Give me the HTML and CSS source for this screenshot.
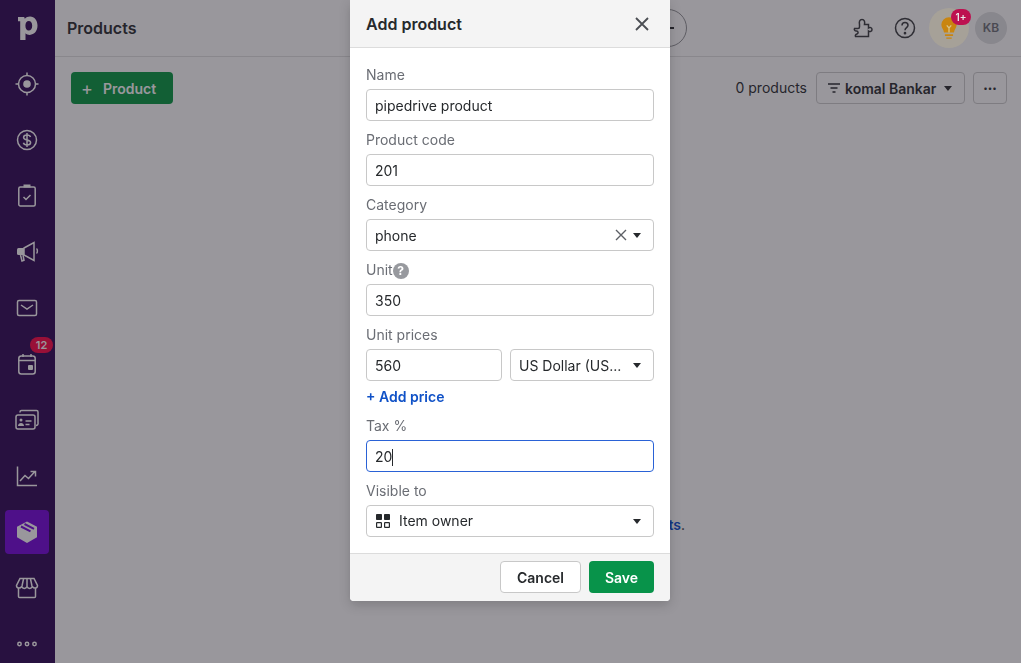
FILE: index.html

```html
<!DOCTYPE html>
<html lang="en">
<head>
  <meta charset="UTF-8" />
  <title>Products</title>
  <link rel="stylesheet" href="styles.css">
</head>
<body>

  <nav class="sidebar">
    <div class="nav-item logo">
      <svg width="24" height="28" viewBox="0 0 24 28"><path fill-rule="evenodd" d="M3 3h6.2l.6 1.8C11 3.500 13 2.600 15 2.600c4.700 0 7.500 4 7.500 9 0 5.300-3.200 9.300-7.700 9.300-1.900 0-3.300-.7-4.300-1.700V26H5.200V7.300H3zM10.400 11.700c0 3.100 1.300 4.700 3.300 4.700s3.500-1.700 3.500-4.700c0-3.100-1.400-4.800-3.400-4.800-2.100 0-3.400 1.700-3.400 4.800z"/></svg>
    </div>
    <div class="nav-item">
      <svg class="ico" viewBox="0 0 24 24"><circle cx="12" cy="12" r="8.500"/><circle class="solid" cx="12" cy="12" r="3.800"/><path d="M12 .5v3M12 20.500v3M.5 12h3M20.500 12h3"/></svg>
    </div>
    <div class="nav-item">
      <svg class="ico" viewBox="0 0 24 24"><circle cx="12" cy="12" r="9.500"/><path d="M15.500 9c-.4-1.400-1.800-2-3.500-2-1.900 0-3.400.9-3.400 2.500 0 3.500 7 1.600 7 5 0 1.600-1.600 2.500-3.600 2.500-1.800 0-3.200-.8-3.600-2.200M12 5v14"/></svg>
    </div>
    <div class="nav-item">
      <svg class="ico" viewBox="0 0 24 24"><rect x="3.800" y="3" width="16.400" height="19" rx="1.500"/><path class="thick" d="M8.500 2h7"/><path d="M8.500 13l2.500 2.500 4.500-4.500"/></svg>
    </div>
    <div class="nav-item">
      <svg class="ico" viewBox="0 0 24 24"><path class="solid" d="M2 9.500a1.500 1.500 0 0 1 1.500-1.500H9v7H3.500A1.500 1.500 0 0 1 2 13.500z"/><path d="M9 8l10-5.500v18L9 15z"/><path d="M21.500 8.500c1.200 1 1.200 4 0 5M5.500 15l1.500 6 2-.7L8 15"/></svg>
    </div>
    <div class="nav-item">
      <svg class="ico" viewBox="0 0 24 24"><rect x="2.500" y="4.500" width="19" height="15" rx="1.500"/><path d="M6 9l6 4 6-4"/></svg>
    </div>
    <div class="nav-item">
      <svg class="ico" viewBox="0 0 24 24"><rect x="3.800" y="4" width="16.400" height="18" rx="2.500"/><path d="M3.800 8.500h16.400M8 2v3M16 2v3"/><rect class="solid" x="13" y="13" width="5" height="5" rx="1"/></svg>
      <span class="count">12</span>
    </div>
    <div class="nav-item">
      <svg class="ico" viewBox="0 0 24 24"><rect x="1" y="7" width="19" height="14" rx="2"/><path d="M5 4.500V4a1.500 1.500 0 0 1 1.500-1.500H21.500A1.500 1.500 0 0 1 23 4v11a2 2 0 0 1-2 2.500M10.500 13h6M10.500 16.500h4"/><circle class="solid" cx="6" cy="12" r="1.500"/><path class="solid" d="M3 18c0-2 1.500-3 3-3s3 1 3 3z"/></svg>
    </div>
    <div class="nav-item">
      <svg class="ico" viewBox="0 0 24 24"><path d="M2.500 2.500v19h19.500M5 17l5-5.500 3.500 3 6-6.500M15.500 7.500h5v5"/></svg>
    </div>
    <div class="nav-item">
      <div class="nav-active">
        <svg width="24" height="24" viewBox="0 0 24 24"><path fill="#fff" d="M12 1.500l10 5.200v10.600L12 23 2 17.300V6.700z"/><path fill="none" stroke="#7100dc" stroke-width="2" d="M6 6.500l9.500 4.800M9.500 4l9.500 4.800"/></svg>
      </div>
    </div>
    <div class="nav-item">
      <svg class="ico" viewBox="0 0 24 24"><path d="M5 2.500h14l3.500 7c0 3-3.500 3.500-5.200 1-1 2.500-4.300 2.500-5.300 0-1 2.500-4.300 2.500-5.300 0-1.700 2.500-5.200 2-5.200-1zM3.500 11.500v9a1 1 0 0 0 1 1h15a1 1 0 0 0 1-1v-9M8.500 3L7 10M15.500 3l1.500 7M12 3v7"/></svg>
    </div>
    <div class="nav-item">
      <svg class="ico" viewBox="0 0 24 24"><circle cx="4.500" cy="12" r="1.700"/><circle cx="12" cy="12" r="1.700"/><circle cx="19.500" cy="12" r="1.700"/></svg>
    </div>
  </nav>

  <div class="main">
    <header class="topbar">
      <h1>Products</h1>
      <div class="quick-add"><span class="quick-plus"></span></div>
      <div class="top-icons">
        <svg class="top-ico" viewBox="0 0 24 24"><path d="M9.500 8.500C9 6 9.500 3.500 12 3.500S15 6 14.500 8.500H18.500V12C20 11 22 11.500 22 13.500S20 16 18.500 15V20.500H5.500C5 19.500 5.500 18.500 7 18C8.500 17.500 8.500 15 6.500 15C4.500 15 4 13.500 4.500 12.500H8C9 12.500 9.500 12 9.500 11Z"/></svg>
        <svg class="top-ico help-ico" viewBox="0 0 24 24"><circle cx="12" cy="12" r="9.500"/><path d="M9 9.500c0-1.800 1.300-3 3-3s3 1.200 3 2.800c0 2.400-3 2.400-3 5"/><circle class="dot" cx="12" cy="17.200" r=".6"/></svg>
        <div class="tips">
          <svg width="18" height="24" viewBox="0 0 20 26"><path fill="#c98510" d="M10 1a8.500 8.500 0 0 1 8.500 8.500c0 3.500-2.500 5-3 8.500h-11c-.5-3.500-3-5-3-8.500A8.500 8.500 0 0 1 10 1zM5.500 20h9v2h-9zM7 23.500h6V25H7z"/><path fill="none" stroke="#d8c48a" stroke-width="1.400" d="M7.500 10l2.500 3 2.500-3M10 13v5"/></svg>
          <span class="tips-count">1+</span>
        </div>
        <div class="avatar">KB</div>
      </div>
    </header>

    <div class="toolbar">
      <button class="add-btn"><span class="add-plus">+</span>Product</button>
      <div class="toolbar-right">
        <span class="total">0 products</span>
        <button class="filter-btn">
          <svg width="14" height="12" viewBox="0 0 14 12"><path d="M1 2h12M3.500 6h7M5.500 10h3" fill="none" stroke="#26292c" stroke-width="1.500"/></svg>
          <span class="filter-name">komal Bankar</span>
          <span class="caret"></span>
        </button>
        <button class="more-btn">&#8226;&#8226;&#8226;</button>
      </div>
    </div>

    <p class="empty"><a>import products</a>.</p>
  </div>

  <div class="overlay"></div>

  <div class="modal">
    <div class="modal-head">
      <h2>Add product</h2>
      <svg width="16" height="16" viewBox="0 0 16 16"><path d="M2 2l12 12M14 2L2 14" stroke="#4b4e53" stroke-width="1.800" fill="none"/></svg>
    </div>

    <div class="modal-body">
      <div class="field">
        <div class="label">Name</div>
        <div class="box">pipedrive product</div>
      </div>
      <div class="field">
        <div class="label">Product code</div>
        <div class="box">201</div>
      </div>
      <div class="field">
        <div class="label">Category</div>
        <div class="box select">
          <span class="box-text">phone</span>
          <svg class="clear" width="12" height="12" viewBox="0 0 12 12"><path d="M1 1l10 10M11 1L1 11" stroke="#5c5f65" stroke-width="1.400" fill="none"/></svg>
          <span class="caret"></span>
        </div>
      </div>
      <div class="field">
        <div class="label">Unit<span class="help">?</span></div>
        <div class="box">350</div>
      </div>
      <div class="field">
        <div class="label">Unit prices</div>
        <div class="price-row">
          <div class="box price">560</div>
          <div class="box select currency">
            <span class="box-text">US Dollar (US...</span>
            <span class="caret"></span>
          </div>
        </div>
        <a class="add-price">+ Add price</a>
      </div>
      <div class="field">
        <div class="label">Tax %</div>
        <div class="box focused">20<span class="text-caret"></span></div>
      </div>
      <div class="field">
        <div class="label">Visible to</div>
        <div class="box select visible">
          <svg class="grid-ico" width="14" height="14" viewBox="0 0 14 14"><rect x="0" y="0" width="6" height="6" rx=".8"/><rect x="8" y="0" width="6" height="6" rx=".8"/><rect class="open" x=".6" y="8.600" width="4.800" height="4.800" rx=".5"/><rect class="open" x="8.600" y="8.600" width="4.800" height="4.800" rx=".5"/></svg>
          <span class="box-text">Item owner</span>
          <span class="caret"></span>
        </div>
      </div>
    </div>

    <div class="modal-foot">
      <button class="btn-cancel">Cancel</button>
      <button class="btn-save">Save</button>
    </div>
  </div>

</body>
</html>
```

FILE: styles.css

```css
* {
  box-sizing: border-box;
}

html, body {
  margin: 0;
  padding: 0;
  height: 100%;
  overflow: hidden;
}

body {
  display: flex;
  background-color: #fff;
  font-family: Inter, "Liberation Sans", sans-serif;
  font-size: 14px;
  line-height: 20px;
  color: #26292c;
}

button {
  font-family: inherit;
  font-size: 14px;
  cursor: pointer;
}

/* sidebar */
.sidebar {
  width: 55px;
  flex: none;
  background-color: #2b0251;
}

.nav-item {
  position: relative;
  height: 56px;
  padding-right: 1px;
  display: flex;
  align-items: center;
  justify-content: center;
}

.logo svg {
  fill: #fff;
}

.ico {
  width: 24px;
  height: 24px;
  fill: none;
  stroke: #fff;
  stroke-width: 1.500;
}

.ico .solid {
  fill: #fff;
  stroke: none;
}

.ico .thick {
  stroke-width: 3;
}

.nav-active {
  width: 44px;
  height: 44px;
  border-radius: 4px;
  background-color: #7100dc;
  display: flex;
  align-items: center;
  justify-content: center;
}

.count {
  position: absolute;
  top: 1px;
  left: 30px;
  width: 23px;
  height: 16px;
  border-radius: 8px;
  background-color: #ff0040;
  color: #fff;
  font-size: 11px;
  font-weight: 600;
  line-height: 16px;
  text-align: center;
}

/* main */
.main {
  flex: 1;
  min-width: 0;
}

.topbar {
  height: 57px;
  border-bottom: 1px solid #e0e0e0;
  display: flex;
  align-items: center;
  padding: 0 14px 0 12px;
}

.topbar h1 {
  margin: 0;
  font-size: 16px;
  font-weight: 600;
  line-height: 24px;
}

.quick-add {
  width: 287px;
  height: 38px;
  margin-left: 264px;
  border: 1px solid #8f9194;
  border-radius: 19px;
  display: flex;
  align-items: center;
  justify-content: flex-end;
  padding-right: 12px;
}

.quick-plus {
  width: 5px;
  height: 2px;
  background-color: #26292c;
}

.top-icons {
  margin-left: auto;
  display: flex;
  align-items: center;
}

.top-ico {
  width: 24px;
  height: 24px;
  margin-right: 19px;
  fill: none;
  stroke: #36383c;
  stroke-width: 1.500;
}

.help-ico {
  margin-right: 12px;
}

.top-ico .dot {
  fill: #36383c;
}

.tips {
  position: relative;
  z-index: 3;
  width: 40px;
  height: 40px;
  margin: 0 6px 0 0;
  border-radius: 50%;
  background-color: rgba(255, 233, 130, 0.13);
  display: flex;
  align-items: center;
  justify-content: center;
}

.tips-count {
  position: absolute;
  top: 1px;
  right: -2px;
  width: 20px;
  height: 16px;
  border-radius: 8px;
  background-color: #bd1150;
  color: #e8e8e8;
  font-size: 10px;
  font-weight: 600;
  line-height: 16px;
  text-align: center;
}

.avatar {
  width: 32px;
  height: 32px;
  border-radius: 50%;
  background-color: #dfe0e2;
  color: #6a6d74;
  font-size: 12px;
  font-weight: 600;
  line-height: 32px;
  text-align: center;
}

.toolbar {
  display: flex;
  align-items: center;
  justify-content: space-between;
  padding: 15px 14px 0 16px;
}

.add-btn {
  width: 102px;
  height: 32px;
  border: none;
  border-radius: 4px;
  background-color: #00953e;
  color: #fff;
  font-weight: 600;
  display: flex;
  align-items: center;
  padding: 0 10px;
}

.add-plus {
  width: 22px;
  font-size: 18px;
  font-weight: 400;
  text-align: left;
}

.toolbar-right {
  display: flex;
  align-items: center;
}

.total {
  margin-right: 9px;
}

.filter-btn {
  width: 149px;
  height: 32px;
  padding: 0 12px 0 10px;
  border: 1px solid #ccc;
  border-radius: 4px;
  background-color: #fff;
  color: #26292c;
  font-weight: 600;
  display: flex;
  align-items: center;
  gap: 4px;
}

.filter-name {
  flex: 1;
  text-align: left;
  white-space: nowrap;
}

.more-btn {
  width: 34px;
  height: 32px;
  margin-left: 8px;
  padding: 0;
  border: 1px solid #ccc;
  border-radius: 4px;
  background-color: #fff;
  color: #26292c;
  font-size: 8px;
  letter-spacing: 0;
}

.caret {
  width: 0;
  height: 0;
  flex: none;
  border-left: 4.500px solid transparent;
  border-right: 4.500px solid transparent;
  border-top: 5px solid #26292c;
}

.empty {
  margin: 411px 0 0;
  padding-right: 336px;
  text-align: right;
  color: #26292c;
}

.empty a {
  color: #0049d1;
  font-weight: 600;
}

.overlay {
  position: fixed;
  inset: 0;
  z-index: 2;
  background-color: rgba(38, 35, 45, 0.47);
}

/* modal */
.modal {
  position: fixed;
  top: 0;
  left: 350px;
  z-index: 4;
  width: 320px;
  height: 601px;
  display: flex;
  flex-direction: column;
  background-color: #fff;
  border-radius: 0 0 4px 4px;
  box-shadow: 0 4px 12px rgba(0, 0, 0, 0.18);
}

.modal-head {
  height: 48px;
  flex: none;
  padding: 0 20px 0 16px;
  display: flex;
  align-items: center;
  justify-content: space-between;
  background-color: #f4f4f4;
  border-bottom: 1px solid #dcdcdc;
}

.modal-head h2 {
  margin: 0;
  font-size: 16px;
  font-weight: 600;
}

.modal-body {
  flex: 1;
  padding: 17px 16px 0;
}

.field {
  margin-bottom: 9px;
}

.label {
  margin-bottom: 4px;
  color: #6a6d74;
  display: flex;
  align-items: center;
}

.help {
  width: 16px;
  height: 16px;
  margin-top: 2px;
  border-radius: 50%;
  background-color: #97999e;
  color: #fff;
  font-size: 12px;
  font-weight: 700;
  line-height: 16px;
  text-align: center;
}

.box {
  height: 32px;
  padding: 0 8px;
  border: 1px solid #c8c8c8;
  border-radius: 4px;
  background-color: #fff;
  line-height: 32px;
}

.select {
  display: flex;
  align-items: center;
}

.box-text {
  flex: 1;
  min-width: 0;
  margin-top: 2px;
  line-height: 20px;
  white-space: nowrap;
}

.visible .box-text {
  margin-top: 0;
}

.clear {
  margin-right: 6px;
}

.select .caret {
  margin-right: 4px;
}

.price-row {
  display: flex;
  gap: 8px;
}

.price {
  width: 136px;
}

.currency {
  width: 144px;
}

.add-price {
  display: block;
  margin-top: 6px;
  color: #0f51c7;
  font-weight: 600;
}

.focused {
  border-color: #2a62d6;
}

.text-caret {
  display: inline-block;
  width: 1px;
  height: 17px;
  vertical-align: -4px;
  background-color: #26292c;
}

.grid-ico {
  margin: 0 9px 0 1px;
  fill: #26292c;
}

.grid-ico .open {
  fill: none;
  stroke: #26292c;
  stroke-width: 1.200;
}

.modal-foot {
  height: 48px;
  flex: none;
  padding: 7px 16px 0;
  display: flex;
  align-items: flex-start;
  justify-content: flex-end;
  gap: 8px;
  background-color: #f4f4f4;
  border-top: 1px solid #dcdcdc;
  border-radius: 0 0 4px 4px;
}

.btn-cancel,
.btn-save {
  height: 32px;
  border-radius: 4px;
  font-weight: 600;
  padding: 0;
}

.btn-cancel {
  width: 81px;
  border: 1px solid #c8c8c8;
  background-color: #fff;
  color: #26292c;
}

.btn-save {
  width: 65px;
  border: none;
  background-color: #08934a;
  color: #fff;
}
```
